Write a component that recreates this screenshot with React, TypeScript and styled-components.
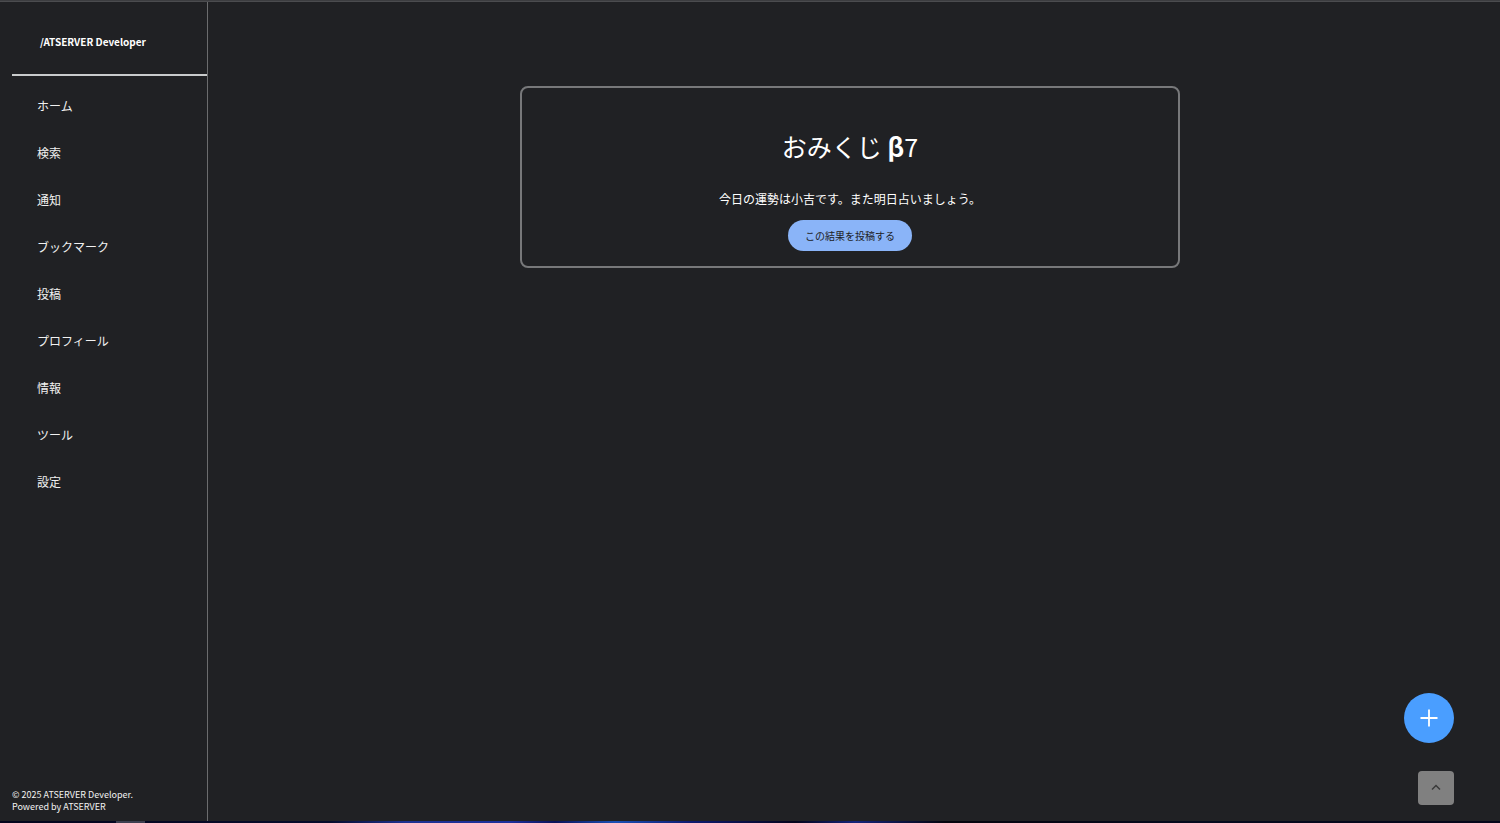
import React from "react";
import styled, { createGlobalStyle } from "styled-components";

const GlobalStyle = createGlobalStyle`
  *, *::before, *::after { box-sizing: border-box; }
  body {
    margin: 0;
    background: #202124;
    color: #fff;
    font-family: "Noto Sans CJK JP", "Noto Sans", sans-serif;
    font-size: 12px;
  }
`;

const Shell = styled.div`
  display: flex;
  flex-direction: column;
  min-height: 100vh;
`;

const TopEdge = styled.div`
  height: 2px;
  background: linear-gradient(#3c3d40 50%, #4b4c4f 50%);
`;

const BottomEdge = styled.div`
  display: flex;
  height: 2px;
  padding-left: 116px;
  background: linear-gradient(
    90deg,
    #03041c 0%,
    #060c2c 22%,
    #1d3190 27%,
    #1c2f9c 34%,
    #0a1258 37%,
    #1a4fb4 41%,
    #0d1a70 46%,
    #04041c 53%,
    #14247a 57%,
    #04040e 63%,
    #040a1e 80%,
    #04061a 100%
  );
`;

const EdgeHandle = styled.span`
  width: 29px;
  background: #3d3f50;
`;

const Columns = styled.div`
  display: flex;
  flex: 1;
`;

const Sidebar = styled.aside`
  display: flex;
  flex-direction: column;
  flex: none;
  width: 208px;
  padding-left: 12px;
  border-right: 1px solid #6b6c6e;
`;

const Brand = styled.a`
  display: flex;
  align-items: center;
  height: 74px;
  padding: 8px 28px 0;
  border-bottom: 2px solid #c9cbcc;
  color: #fff;
  font-size: 10px;
  font-weight: 700;
  line-height: 16px;
  white-space: nowrap;
  text-decoration: none;
`;

const NavList = styled.ul`
  margin: 0;
  padding: 6px 0 0;
  list-style: none;
`;

const NavLink = styled.a`
  display: flex;
  align-items: center;
  height: 47px;
  padding-left: 25px;
  color: #f1f1f1;
  font-size: 12px;
  text-decoration: none;
`;

const Footer = styled.footer`
  margin-top: auto;
  padding-bottom: 8px;
  color: #f1f1f1;
  font-size: 9px;
  line-height: 12px;
`;

const Main = styled.main`
  display: flex;
  flex: 1;
  justify-content: center;
  align-items: flex-start;
  padding: 84px 8px 84px 0;
`;

const Card = styled.section`
  display: flex;
  flex-direction: column;
  align-items: center;
  width: 100%;
  max-width: 660px;
  padding: 40px 16px 15px;
  border: 2px solid #77787a;
  border-radius: 8px;
`;

const Title = styled.h1`
  margin: 0;
  font-size: 25px;
  font-weight: 400;
  line-height: 36px;
`;

const Beta = styled.span`
  font-weight: 700;
`;

const Fortune = styled.p`
  margin: 26px 0 12px;
  font-size: 12px;
  line-height: 18px;
`;

const PostButton = styled.button`
  height: 31px;
  padding: 0 17px;
  border: 0;
  border-radius: 16px;
  background: #8ab4f8;
  color: #202124;
  font-family: inherit;
  font-size: 10px;
`;

const FloatingActions = styled.div`
  position: fixed;
  right: 46px;
  bottom: 18px;
  display: flex;
  flex-direction: column;
  align-items: flex-end;
  gap: 28px;
`;

const ComposeButton = styled.button`
  display: grid;
  place-items: center;
  width: 50px;
  height: 50px;
  padding: 0;
  border: 0;
  border-radius: 50%;
  background: #4a9eff;
  color: #fff;
`;

const BackToTopButton = styled.button`
  display: grid;
  place-items: center;
  width: 36px;
  height: 34px;
  padding: 0;
  border: 0;
  border-radius: 4px;
  background: #808080;
  color: #3a3a3a;
`;

const links = ["ホーム", "検索", "通知", "ブックマーク", "投稿", "プロフィール", "情報", "ツール", "設定"];

export default function App() {
  return (
    <>
      <GlobalStyle />
      <Shell>
        <TopEdge />
        <Columns>
          <Sidebar>
            <Brand href="#">/ATSERVER Developer</Brand>
            <nav>
              <NavList>
                {links.map((label) => (
                  <li key={label}>
                    <NavLink href="#">{label}</NavLink>
                  </li>
                ))}
              </NavList>
            </nav>
            <Footer>
              © 2025 ATSERVER Developer.
              <br />
              Powered by ATSERVER
            </Footer>
          </Sidebar>
          <Main>
            <Card>
              <Title>
                おみくじ <Beta>β</Beta>7
              </Title>
              <Fortune>今日の運勢は小吉です。また明日占いましょう。</Fortune>
              <PostButton type="button">この結果を投稿する</PostButton>
            </Card>
          </Main>
        </Columns>
        <BottomEdge>
          <EdgeHandle />
        </BottomEdge>
      </Shell>
      <FloatingActions>
        <ComposeButton type="button" aria-label="投稿を作成">
          <svg width="18" height="18" viewBox="0 0 18 18" fill="none" stroke="currentColor" strokeWidth="1.8">
            <path d="M9 0.5V17.5M0.5 9H17.5" />
          </svg>
        </ComposeButton>
        <BackToTopButton type="button" aria-label="トップへ戻る">
          <svg width="10" height="8" viewBox="0 0 10 8" fill="none" stroke="currentColor" strokeWidth="1.5">
            <path d="M1 5.5L5 1.5L9 5.5" />
          </svg>
        </BackToTopButton>
      </FloatingActions>
    </>
  );
}
